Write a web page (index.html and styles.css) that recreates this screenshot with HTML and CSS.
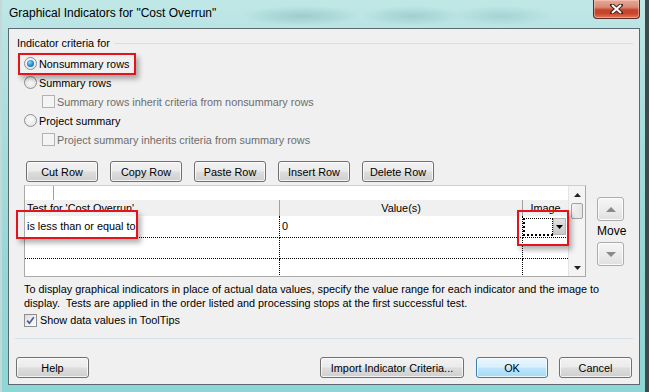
FILE: index.html
```html
<!DOCTYPE html>
<html lang="en">
<head>
    <meta charset="UTF-8">
    <meta name="viewport" content="width=device-width, initial-scale=1.0">
    <title>Graphical Indicators for "Cost Overrun"</title>
    <link rel="stylesheet" href="styles.css">
</head>
<body>
    <div class="window">
        <div class="titlebar">
            <span class="title">Graphical Indicators for "Cost Overrun"</span>
            <div class="close-btn">
                <svg width="13" height="10" viewBox="0 0 13 10">
                    <path d="M2 1 L11 9 M11 1 L2 9" stroke="#4a2119" stroke-width="4" stroke-linecap="square" fill="none"/>
                    <path d="M2 1 L11 9 M11 1 L2 9" stroke="#fff" stroke-width="2" fill="none"/>
                </svg>
            </div>
        </div>

        <div class="client">
            <div class="group-head">
                <span>Indicator criteria for</span>
                <div class="rule"></div>
            </div>

            <div class="options">
                <div class="opt"><span class="radio on"></span>Nonsummary rows</div>
                <div class="opt"><span class="radio"></span>Summary rows</div>
                <div class="opt sub disabled"><span class="check"></span>Summary rows inherit criteria from nonsummary rows</div>
                <div class="opt"><span class="radio"></span>Project summary</div>
                <div class="opt sub disabled"><span class="check"></span>Project summary inherits criteria from summary rows</div>
            </div>

            <div class="toolbar">
                <button class="btn">Cut Row</button>
                <button class="btn">Copy Row</button>
                <button class="btn">Paste Row</button>
                <button class="btn">Insert Row</button>
                <button class="btn">Delete Row</button>
            </div>

            <div class="table-area">
                <div class="sheet">
                    <div class="sheet-body">
                        <div class="entry-bar"><div class="entry-cell"></div></div>
                        <div class="row head">
                            <div class="c1">Test for 'Cost Overrun'</div>
                            <div class="c2">Value(s)</div>
                            <div class="c3">Image</div>
                        </div>
                        <div class="row r1">
                            <div class="c1">is less than or equal to</div>
                            <div class="c2">0</div>
                            <div class="c3">
                                <div class="combo">
                                    <div class="combo-field"></div>
                                    <div class="combo-btn">
                                        <svg width="7" height="4" viewBox="0 0 7 4"><polygon points="0,0 7,0 3.5,4" fill="#000"/></svg>
                                    </div>
                                </div>
                            </div>
                        </div>
                        <div class="row r2">
                            <div class="c1"></div>
                            <div class="c2"></div>
                            <div class="c3"></div>
                        </div>
                        <div class="row r3">
                            <div class="c1"></div>
                            <div class="c2"></div>
                            <div class="c3"></div>
                        </div>
                    </div>
                    <div class="vscroll">
                        <div class="arrow">
                            <svg width="7" height="4" viewBox="0 0 7 4"><polygon points="0,4 7,4 3.5,0" fill="#222"/></svg>
                        </div>
                        <div class="thumb"></div>
                        <div class="track"></div>
                        <div class="arrow">
                            <svg width="7" height="4" viewBox="0 0 7 4"><polygon points="0,0 7,0 3.5,4" fill="#222"/></svg>
                        </div>
                    </div>
                </div>

                <div class="move">
                    <button class="move-btn">
                        <svg width="10" height="5" viewBox="0 0 10 5"><polygon points="0,5 10,5 5,0" fill="#8a8a8a"/></svg>
                    </button>
                    <span class="move-label">Move</span>
                    <button class="move-btn">
                        <svg width="10" height="5" viewBox="0 0 10 5"><polygon points="0,0 10,0 5,5" fill="#8a8a8a"/></svg>
                    </button>
                </div>
            </div>

            <p class="note">To display graphical indicators in place of actual data values, specify the value range for each indicator and the image to<br>display.&nbsp; Tests are applied in the order listed and processing stops at the first successful test.</p>

            <div class="opt tips">
                <span class="check on">
                    <svg width="9" height="9" viewBox="0 0 9 9"><path d="M1.2 4.6 L3.4 7.2 L7.8 1.2" stroke="#4b5d9c" stroke-width="1.7" fill="none"/></svg>
                </span>
                Show data values in ToolTips
            </div>

            <div class="separator"></div>

            <div class="footer">
                <button class="btn help">Help</button>
                <button class="btn import">Import Indicator Criteria...</button>
                <button class="btn ok">OK</button>
                <button class="btn cancel">Cancel</button>
            </div>

            <!-- annotation boxes -->
            <div class="mark mark-nonsummary"></div>
            <div class="mark mark-test"></div>
            <div class="mark mark-image"></div>
        </div>
    </div>
</body>
</html>
```

FILE: styles.css
```css
/* Base */
* {
    margin: 0;
    padding: 0;
    box-sizing: border-box;
}

body {
    width: 649px;
    height: 392px;
    overflow: hidden;
    font-family: 'Liberation Sans', Arial, sans-serif;
    font-size: 10.85px;
    color: #000;
    background: #3b4646;
}

/* Window frame */
.window {
    width: 649px;
    height: 392px;
    display: flex;
    flex-direction: column;
    padding: 0 5px 7px 6px;
    border-left: 2px solid #c3d8d8;
    border-right: 4px solid #3e4a4b;
    background:
        radial-gradient(ellipse 60px 10px at 300px 16px, rgba(60, 130, 130, 0.25), transparent),
        radial-gradient(ellipse 50px 10px at 410px 16px, rgba(60, 130, 130, 0.22), transparent),
        radial-gradient(ellipse 50px 10px at 500px 16px, rgba(60, 130, 130, 0.18), transparent),
        linear-gradient(180deg, #bfe7e6 0%, #a9dedd 30%, #97d6d5 70%, #8ed6d6 100%);
}

.titlebar {
    height: 28px;
    display: flex;
    align-items: flex-start;
    padding-left: 1px;
}

.title {
    font-size: 12px;
    line-height: 14px;
    margin-top: 6px;
}

.close-btn {
    margin-left: auto;
    width: 47px;
    height: 19px;
    border: 1px solid #5b2b22;
    border-top: none;
    border-radius: 0 0 4px 4px;
    display: flex;
    align-items: center;
    justify-content: center;
    background: linear-gradient(180deg, #e6a796 0%, #d98a76 40%, #c5452c 55%, #c9452d 75%, #dd7a5c 100%);
    box-shadow: inset 0 0 0 1px rgba(255, 220, 210, 0.45);
}

/* Client area */
.client {
    flex: 1;
    position: relative;
    background: #f0f0f0;
    border: 1px solid #5a6a6e;
    padding: 7px 6px 0 8px;
}

.group-head {
    display: flex;
    align-items: center;
    height: 14px;
    line-height: 14px;
}

.group-head .rule {
    flex: 1;
    height: 1px;
    margin-left: 5px;
    background: #d5dfe5;
}

/* Radio and check rows */
.options {
    margin-top: 4px;
    margin-left: 7px;
}

.opt {
    display: flex;
    align-items: center;
    height: 19px;
    white-space: nowrap;
}

.opt.sub {
    padding-left: 18px;
}

.opt.disabled {
    color: #6d6d6d;
}

.radio {
    width: 13px;
    height: 13px;
    margin-right: 2px;
    border: 1px solid #8e8f8f;
    border-radius: 50%;
    background: radial-gradient(circle at 50% 40%, #fdfdfd 0%, #ececec 60%, #dcdcdc 100%);
    display: flex;
    align-items: center;
    justify-content: center;
}

.radio.on::after {
    content: '';
    width: 7px;
    height: 7px;
    border-radius: 50%;
    background: radial-gradient(circle at 40% 35%, #8fd9ff 0%, #3195d6 45%, #12528c 100%);
}

.check {
    width: 13px;
    height: 13px;
    margin-right: 2px;
    border: 1px solid #b1b1b1;
    background: #f4f4f4;
    display: flex;
    align-items: center;
    justify-content: center;
}

.check.on {
    border-color: #8e8f8f;
    background: linear-gradient(135deg, #dcdcdc 0%, #f2f2f2 60%, #fcfcfc 100%);
    margin-right: 3px;
}

/* Buttons */
.btn {
    height: 21px;
    font-family: inherit;
    font-size: 10.85px;
    color: #000;
    border: 1px solid #707070;
    border-radius: 3px;
    background: linear-gradient(180deg, #f2f2f2 0%, #ebebeb 48%, #dddddd 52%, #cfcfcf 100%);
    box-shadow: inset 0 0 0 1px rgba(255, 255, 255, 0.75);
}

.toolbar {
    display: flex;
    gap: 12px;
    margin-top: 12px;
    margin-left: 9px;
}

.toolbar .btn {
    width: 72px;
}

/* Indicator grid */
.table-area {
    display: flex;
    margin-top: 3px;
    margin-left: 7px;
    height: 92px;
}

.sheet {
    width: 562px;
    height: 92px;
    display: flex;
    border: 1px solid #a9a9a9;
    border-top-color: #d0d0d0;
    background: #fff;
    overflow: hidden;
}

.sheet-body {
    width: 543px;
}

.entry-bar {
    height: 14px;
}

.entry-cell {
    width: 29px;
    height: 14px;
    border-right: 1px solid #a0a0a0;
}

.row {
    display: flex;
}

.row > div {
    padding-left: 2px;
    white-space: nowrap;
}

.c1 { width: 255px; }
.c2 { width: 243px; }
.c3 { width: 45px; }

.row.head {
    height: 16px;
    line-height: 16px;
    background: #f0f0f0;
}

.row.head .c1,
.row.head .c2 {
    border-right: 1px solid #a0a0a0;
}

.row.head .c2,
.row.head .c3 {
    text-align: center;
    padding-left: 0;
}

.row.r1 { height: 22px; }
.row.r2 { height: 21px; }
.row.r3 { height: 18px; }

.row.r1 > div,
.row.r2 > div,
.row.r3 > div {
    line-height: 20px;
}

.row.r1 > div,
.row.r2 > div {
    border-bottom: 1px dotted #000;
}

.row.r1 .c1, .row.r1 .c2,
.row.r2 .c1, .row.r2 .c2,
.row.r3 .c1, .row.r3 .c2 {
    border-right: 1px dotted #000;
}

.row.r1 .c3 {
    padding: 2px 0 0 0;
}

.combo {
    display: flex;
    width: 43px;
    height: 18px;
}

.combo-field {
    width: 30px;
    border: 1px dotted #000;
    border-left-width: 2px;
    border-bottom-width: 2px;
    background: #fff;
}

.combo-btn {
    width: 13px;
    height: 17px;
    display: flex;
    align-items: center;
    justify-content: center;
    background: linear-gradient(180deg, #e2e2e2, #c9c9c9);
    border: 1px solid #b5b5b5;
}

.vscroll {
    width: 17px;
    display: flex;
    flex-direction: column;
    background: #f4f4f4;
    border-left: 1px solid #e4e4e4;
}

.vscroll .arrow {
    height: 17px;
    display: flex;
    align-items: center;
    justify-content: center;
}

.vscroll .thumb {
    height: 16px;
    margin: 0 2px 0 2px;
    border: 1px solid #a2a2a2;
    border-radius: 2px;
    background: linear-gradient(90deg, #f3f3f3, #e4e4e4);
}

.vscroll .track {
    flex: 1;
}

/* Move buttons */
.move {
    width: 27px;
    margin-left: 11px;
    padding-top: 12px;
    display: flex;
    flex-direction: column;
}

.move-btn {
    width: 27px;
    height: 24px;
    border: 1px solid #acacac;
    border-radius: 3px;
    background: linear-gradient(180deg, #f6f6f6 0%, #ececec 50%, #e0e0e0 100%);
    box-shadow: inset 0 0 0 1px rgba(255, 255, 255, 0.8);
    display: flex;
    align-items: center;
    justify-content: center;
}

.move-label {
    height: 21px;
    line-height: 21px;
    text-align: center;
    font-size: 12px;
}

/* Note and footer */
.note {
    margin-top: 5px;
    margin-left: 7px;
    line-height: 14px;
    white-space: nowrap;
}

.opt.tips {
    margin-top: 2px;
    margin-left: 7px;
    height: 16px;
}

.separator {
    margin-top: 10px;
    margin-left: -2px;
    height: 1px;
    background: #d5dfe5;
}

.footer {
    display: flex;
    margin-top: 18px;
    margin-left: -1px;
}

.btn.help { width: 73px; }

.btn.import {
    width: 144px;
    margin-left: auto;
}

.btn.ok {
    width: 72px;
    margin-left: 12px;
    border-color: #3c7fb1;
    background: linear-gradient(180deg, #eaf6fd 0%, #d9f0fc 48%, #bee6fd 52%, #a7d9f5 100%);
}

.btn.cancel {
    width: 73px;
    margin-left: 11px;
    margin-right: 1px;
}

/* Red annotation boxes drawn over the dialog */
.mark {
    position: absolute;
    border: 2px solid #e5141c;
    box-shadow: 3px 4px 5px rgba(0, 0, 0, 0.3);
}

.mark-nonsummary {
    left: 9px;
    top: 24px;
    width: 118px;
    height: 22px;
}

.mark-test {
    left: 7px;
    top: 181px;
    width: 122px;
    height: 29px;
}

.mark-image {
    left: 508px;
    top: 181px;
    width: 52px;
    height: 36px;
}
```
